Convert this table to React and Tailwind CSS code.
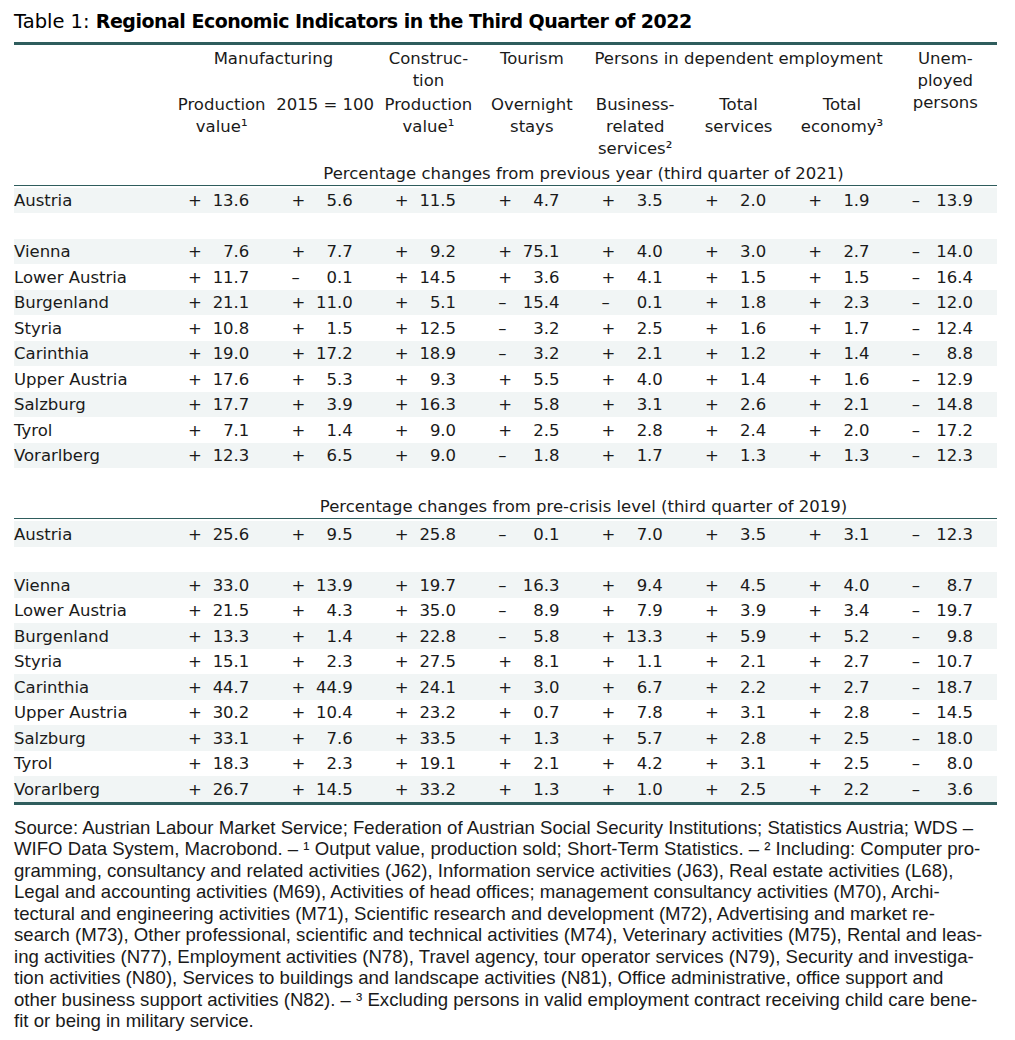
const SECTIONS = [
  {
    title: "Percentage changes from previous year (third quarter of 2021)",
    rows: [
      ["Austria", "+13.6", "+5.6", "+11.5", "+4.7", "+3.5", "+2.0", "+1.9", "–13.9"],
      null,
      ["Vienna", "+7.6", "+7.7", "+9.2", "+75.1", "+4.0", "+3.0", "+2.7", "–14.0"],
      ["Lower Austria", "+11.7", "–0.1", "+14.5", "+3.6", "+4.1", "+1.5", "+1.5", "–16.4"],
      ["Burgenland", "+21.1", "+11.0", "+5.1", "–15.4", "–0.1", "+1.8", "+2.3", "–12.0"],
      ["Styria", "+10.8", "+1.5", "+12.5", "–3.2", "+2.5", "+1.6", "+1.7", "–12.4"],
      ["Carinthia", "+19.0", "+17.2", "+18.9", "–3.2", "+2.1", "+1.2", "+1.4", "–8.8"],
      ["Upper Austria", "+17.6", "+5.3", "+9.3", "+5.5", "+4.0", "+1.4", "+1.6", "–12.9"],
      ["Salzburg", "+17.7", "+3.9", "+16.3", "+5.8", "+3.1", "+2.6", "+2.1", "–14.8"],
      ["Tyrol", "+7.1", "+1.4", "+9.0", "+2.5", "+2.8", "+2.4", "+2.0", "–17.2"],
      ["Vorarlberg", "+12.3", "+6.5", "+9.0", "–1.8", "+1.7", "+1.3", "+1.3", "–12.3"],
    ],
  },
  {
    title: "Percentage changes from pre-crisis level (third quarter of 2019)",
    rows: [
      ["Austria", "+25.6", "+9.5", "+25.8", "–0.1", "+7.0", "+3.5", "+3.1", "–12.3"],
      null,
      ["Vienna", "+33.0", "+13.9", "+19.7", "–16.3", "+9.4", "+4.5", "+4.0", "–8.7"],
      ["Lower Austria", "+21.5", "+4.3", "+35.0", "–8.9", "+7.9", "+3.9", "+3.4", "–19.7"],
      ["Burgenland", "+13.3", "+1.4", "+22.8", "–5.8", "+13.3", "+5.9", "+5.2", "–9.8"],
      ["Styria", "+15.1", "+2.3", "+27.5", "+8.1", "+1.1", "+2.1", "+2.7", "–10.7"],
      ["Carinthia", "+44.7", "+44.9", "+24.1", "+3.0", "+6.7", "+2.2", "+2.7", "–18.7"],
      ["Upper Austria", "+30.2", "+10.4", "+23.2", "+0.7", "+7.8", "+3.1", "+2.8", "–14.5"],
      ["Salzburg", "+33.1", "+7.6", "+33.5", "+1.3", "+5.7", "+2.8", "+2.5", "–18.0"],
      ["Tyrol", "+18.3", "+2.3", "+19.1", "+2.1", "+4.2", "+3.1", "+2.5", "–8.0"],
      ["Vorarlberg", "+26.7", "+14.5", "+33.2", "+1.3", "+1.0", "+2.5", "+2.2", "–3.6"],
    ],
  },
];

const NOTES = [
  "Source: Austrian Labour Market Service; Federation of Austrian Social Security Institutions; Statistics Austria; WDS –",
  "WIFO Data System, Macrobond. – ¹ Output value, production sold; Short-Term Statistics. – ² Including: Computer pro-",
  "gramming, consultancy and related activities (J62), Information service activities (J63), Real estate activities (L68),",
  "Legal and accounting activities (M69), Activities of head offices; management consultancy activities (M70), Archi-",
  "tectural and engineering activities (M71), Scientific research and development (M72), Advertising and market re-",
  "search (M73), Other professional, scientific and technical activities (M74), Veterinary activities (M75), Rental and leas-",
  "ing activities (N77), Employment activities (N78), Travel agency, tour operator services (N79), Security and investiga-",
  "tion activities (N80), Services to buildings and landscape activities (N81), Office administrative, office support and",
  "other business support activities (N82). – ³ Excluding persons in valid employment contract receiving child care bene-",
  "fit or being in military service.",
];

const GRID = "grid grid-cols-[156px_repeat(8,minmax(0,1fr))]";

// one value cell: sign on the left, number flush right
const Cell = ({ v }) => (
  <div className="flex items-center justify-between pl-[18px] pr-[24px]">
    <span>{v[0]}</span>
    <span>{v.slice(1)}</span>
  </div>
);

const Section = ({ title, rows }) => (
  <div>
    <div className={GRID + " h-[25.5px] items-end border-b border-[#2f5d5d]"}>
      <div className="col-start-2 col-span-8 text-center">{title}</div>
    </div>
    <div className="pt-[2px]">
      {rows.map((r, i) =>
        r ? (
          <div
            key={i}
            className={GRID + " h-[25.5px] items-center pt-[2px] " + (i % 2 === 0 ? "bg-[#f1f5f5]" : "")}
          >
            <div>{r[0]}</div>
            {r.slice(1).map((v, j) => (
              <Cell key={j} v={v} />
            ))}
          </div>
        ) : (
          <div key={i} className="h-[25.5px]" />
        )
      )}
    </div>
  </div>
);

export default function App() {
  return (
    <div className="bg-white w-[1015px] min-h-[1040px] pt-[8px] text-[#1a1a1a] font-['DejaVu_Sans',sans-serif]">
      <div className="ml-[14px] w-[983px]">
        {/* title */}
        <h1 className="text-[19.5px] leading-[26px] text-black">
          Table 1: <span className="font-bold text-[19px] tracking-[-0.5px]">Regional Economic Indicators in the Third Quarter of 2022</span>
        </h1>
        <div className="h-[3px] bg-[#2f5d5d] mt-[7px]" />

        <div className="text-[16.5px] leading-[22px]">
          {/* column heads */}
          <div className={GRID + " text-center pt-[3px]"}>
            <div className="col-start-2 col-span-2">Manufacturing</div>
            <div>
              Construc-
              <br />
              tion
            </div>
            <div>Tourism</div>
            <div className="col-span-3">Persons in dependent employment</div>
            <div className="row-span-2">
              Unem-
              <br />
              ployed
              <br />
              persons
            </div>
            <div className="col-start-2 pt-[2px]">
              Production
              <br />
              value¹
            </div>
            <div className="pt-[2px]">2015 = 100</div>
            <div className="pt-[2px]">
              Production
              <br />
              value¹
            </div>
            <div className="pt-[2px]">
              Overnight
              <br />
              stays
            </div>
            <div className="pt-[2px]">
              Business-
              <br />
              related
              <br />
              services²
            </div>
            <div className="pt-[2px]">
              Total
              <br />
              services
            </div>
            <div className="pt-[2px]">
              Total
              <br />
              economy³
            </div>
          </div>

          <Section {...SECTIONS[0]} />
          <div className="h-[25.5px]" />
          <Section {...SECTIONS[1]} />
          <div className="h-[3px] bg-[#2f5d5d]" />
        </div>

        {/* footnotes */}
        <div className="mt-[12px] text-[18.6px] leading-[21.5px] font-['Liberation_Sans_Narrow','Liberation_Sans',sans-serif]">
          {NOTES.map((l, i) => (
            <div key={i} className="whitespace-pre">
              {l}
            </div>
          ))}
        </div>
      </div>
    </div>
  );
}
